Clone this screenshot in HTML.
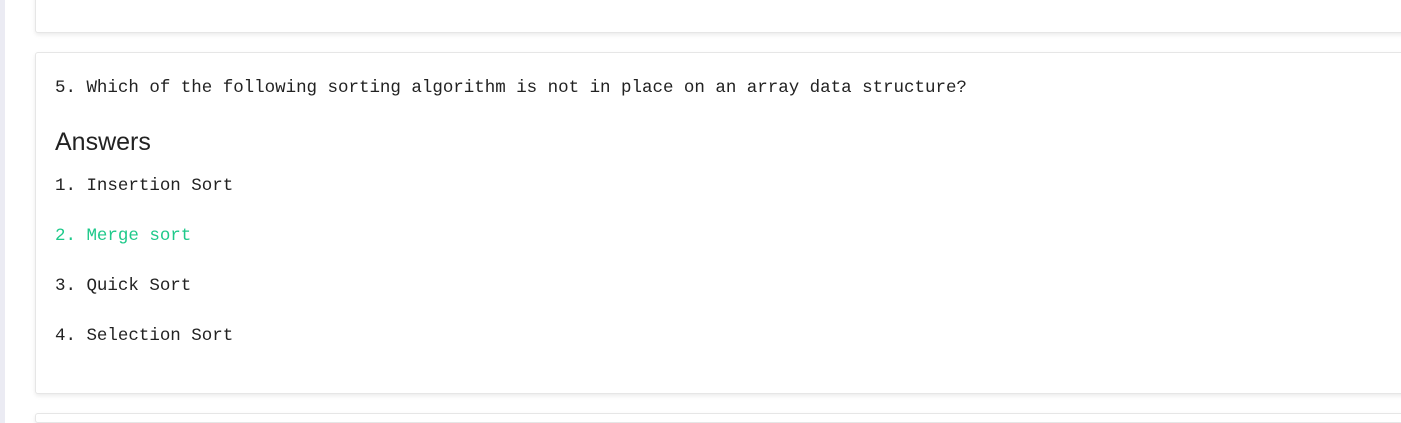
<!DOCTYPE html>
<html><head><meta charset="utf-8"><style>
html,body{margin:0;padding:0;width:1401px;height:423px;overflow:hidden;background:#fff;}
.bar{position:absolute;left:0;top:0;width:5px;height:423px;background:#ebebf3;}
.card{position:absolute;left:35px;width:1380px;background:#fff;border:1px solid #e6e6e6;border-radius:3px;box-shadow:0 2px 4px rgba(0,0,0,0.08);box-sizing:border-box;}
.mono{position:absolute;left:19px;font-family:"Liberation Mono",monospace;font-size:17.5px;letter-spacing:-0.02px;color:#222;white-space:pre;line-height:20px;}
.h{position:absolute;left:19px;font-family:"Liberation Sans",sans-serif;font-size:25px;color:#222;line-height:30px;}
</style></head><body>
<div class="bar"></div>
<div class="card" style="top:-10px;height:43px;"></div>
<div class="card" style="top:52px;height:342px;">
<div class="mono" style="top:25px;">5. Which of the following sorting algorithm is not in place on an array data structure?</div>
<div class="h" style="top:74px;">Answers</div>
<div class="mono" style="top:123px;">1. Insertion Sort</div>
<div class="mono" style="top:173px;color:#1ec98a;">2. Merge sort</div>
<div class="mono" style="top:223px;">3. Quick Sort</div>
<div class="mono" style="top:273px;">4. Selection Sort</div>
</div>
<div class="card" style="top:413px;height:10px;overflow:hidden;"></div>
</body></html>
